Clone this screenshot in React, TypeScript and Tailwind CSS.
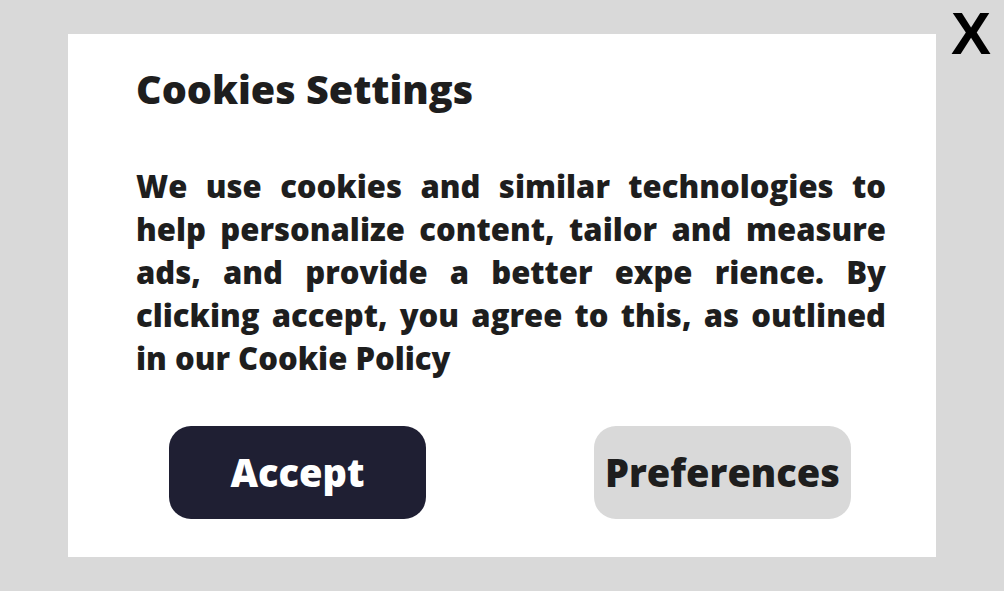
import React from "react";

const lines = [
  "We use cookies and similar technologies to",
  "help personalize content, tailor and measure",
  "ads, and provide a better expe rience. By",
  "clicking accept, you agree to this, as outlined",
];

const App = () => {
  return (
    <div className="relative w-[1004px] h-[591px] bg-[#d9d9d9] font-['Open_Sans',sans-serif] overflow-hidden">
      <button className="absolute top-[4px] right-[13px] text-[60px] leading-none font-bold text-black font-['Liberation_Sans',Arial,sans-serif]">
        X
      </button>
      <div className="absolute left-[68px] top-[34px] w-[868px] h-[523px] bg-white pl-[68px] pr-[50px] pt-[30px] flex flex-col">
        <h1 className="text-[39.5px] leading-[50px] font-extrabold text-[#1e1e1e]">
          Cookies Settings
        </h1>
        <div className="mt-[51px] text-[31px] leading-[43px] font-extrabold text-[#1e1e1e]">
          {lines.map((line, i) => (
            <div key={i} className="text-justify [text-align-last:justify]">
              {line}
            </div>
          ))}
          <div>in our Cookie Policy</div>
        </div>
        <div className="mt-[46px] flex justify-between pl-[33px] pr-[35px]">
          <button className="w-[257px] h-[93px] rounded-[22px] bg-[#1f1f33] text-white text-[38px] font-extrabold">
            Accept
          </button>
          <button className="w-[257px] h-[93px] rounded-[22px] bg-[#d9d9d9] text-[#1e1e1e] text-[38px] font-extrabold">
            Preferences
          </button>
        </div>
      </div>
    </div>
  );
};

export default App;
